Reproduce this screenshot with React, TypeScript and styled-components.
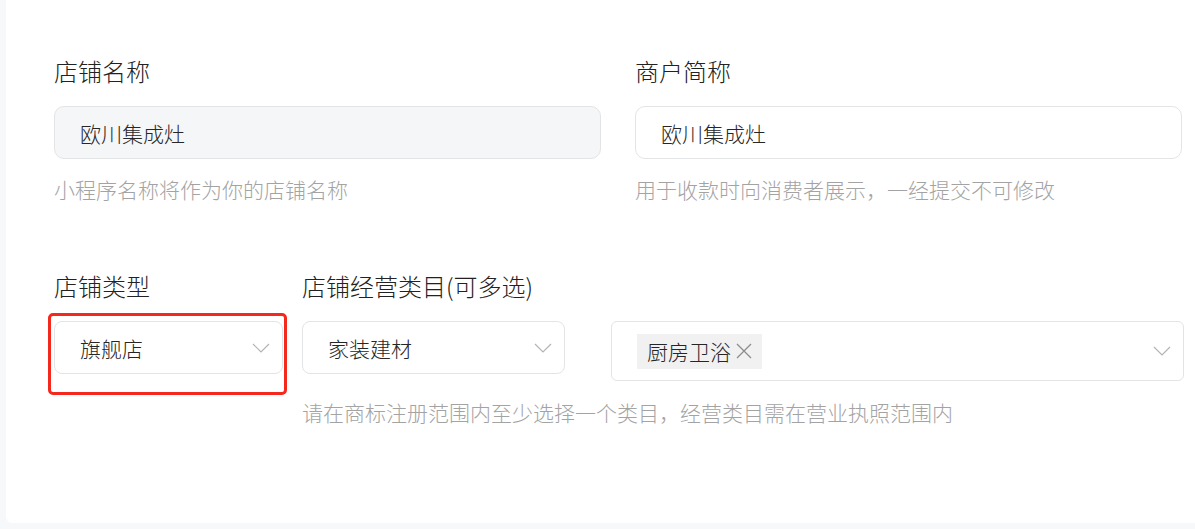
import styled, { createGlobalStyle } from "styled-components";

const GlobalStyle = createGlobalStyle`
  body {
    margin: 0;
    background: #f7f8fa;
    font-family: "Noto Sans CJK SC", "Noto Sans", sans-serif;
    font-weight: 300;
  }
`;

const Page = styled.div`
  height: 529px;
  padding-left: 6px;
  overflow: hidden;
`;

const Card = styled.div`
  height: 523px;
  background: #fff;
  border-bottom-left-radius: 6px;
  padding: 55px 0 0 48px;
  box-sizing: border-box;
`;

const TopRow = styled.div`
  display: grid;
  grid-template-columns: 547px 547px;
  column-gap: 34px;
`;

const BottomRow = styled.div`
  display: flex;
  gap: 19px;
  margin-top: 67px;
`;

const Field = styled.div`
  display: flex;
  flex-direction: column;
`;

const Label = styled.div`
  font-size: 24px;
  line-height: 32px;
  color: #222;
  margin-bottom: 19px;
`;

const Input = styled.div<{ $disabled?: boolean }>`
  height: 53px;
  box-sizing: border-box;
  border: 1px solid #e3e4e6;
  border-radius: 10px;
  background: ${(p) => (p.$disabled ? "#f5f6f8" : "#fff")};
  padding: 0 25px;
  display: flex;
  align-items: center;
  font-size: 21px;
  color: #262626;
`;

const Help = styled.div<{ $top: number }>`
  margin-top: ${(p) => p.$top}px;
  font-size: 21px;
  line-height: 28px;
  color: #a3a3a3;
`;

const SelectRow = styled.div`
  display: flex;
  align-items: flex-start;
  gap: 46px;
`;

const Select = styled.div<{ $w: number; $h?: number }>`
  position: relative;
  width: ${(p) => p.$w}px;
  height: ${(p) => p.$h ?? 53}px;
  box-sizing: border-box;
  border: 1px solid #e3e4e6;
  border-radius: ${(p) => (p.$h ? 6 : 8)}px;
  background: #fff;
  display: flex;
  align-items: center;
  justify-content: space-between;
  padding: 0 12px 0 25px;
  font-size: 21px;
  color: #262626;
`;

const Tag = styled.div`
  height: 35px;
  background: #f1f1f1;
  display: flex;
  align-items: center;
  gap: 4px;
  padding: 0 9px 0 10px;
  font-size: 21px;
  color: #262626;
`;

const Highlight = styled.div`
  position: absolute;
  left: -7px;
  top: -9px;
  right: -5px;
  bottom: -22px;
  border: 3px solid #f5281d;
  border-radius: 5px;
  pointer-events: none;
`;

const Chevron = () => (
  <svg width="18" height="10" viewBox="0 0 18 10" fill="none">
    <path d="M1 1l8 8 8-8" stroke="#b4b4b4" strokeWidth="1.2" />
  </svg>
);

const Close = () => (
  <svg width="18" height="18" viewBox="0 0 18 18" fill="none">
    <path d="M2 2l14 14M16 2L2 16" stroke="#8c8c8c" strokeWidth="1.3" />
  </svg>
);

export default function App() {
  return (
    <>
      <GlobalStyle />
      <Page>
        <Card>
          <TopRow>
            <Field>
              <Label>店铺名称</Label>
              <Input $disabled>欧川集成灶</Input>
              <Help $top={16}>小程序名称将作为你的店铺名称</Help>
            </Field>
            <Field>
              <Label>商户简称</Label>
              <Input>欧川集成灶</Input>
              <Help $top={16}>用于收款时向消费者展示，一经提交不可修改</Help>
            </Field>
          </TopRow>
          <BottomRow>
            <Field>
              <Label>店铺类型</Label>
              <Select $w={229}>
                旗舰店
                <Chevron />
                <Highlight />
              </Select>
            </Field>
            <Field>
              <Label>店铺经营类目(可多选)</Label>
              <SelectRow>
                <Select $w={263}>
                  家装建材
                  <Chevron />
                </Select>
                <Select $w={573} $h={60}>
                  <Tag>
                    厨房卫浴
                    <Close />
                  </Tag>
                  <Chevron />
                </Select>
              </SelectRow>
              <Help $top={17}>请在商标注册范围内至少选择一个类目，经营类目需在营业执照范围内</Help>
            </Field>
          </BottomRow>
        </Card>
      </Page>
    </>
  );
}
